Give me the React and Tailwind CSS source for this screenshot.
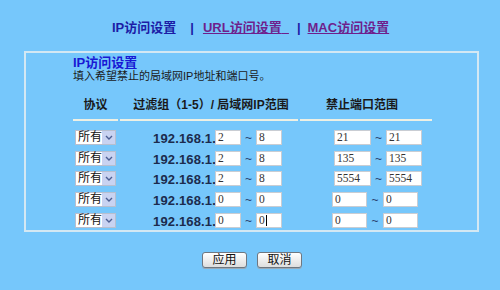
import React from "react";

const FONT = { fontFamily: '"Liberation Sans", "Noto Sans CJK SC", sans-serif' };
const SERIF = { fontFamily: '"Liberation Serif", "Noto Sans CJK SC", serif' };

function Select() {
  return (
    <div className="ml-[2px] flex h-[15px] w-[41px] border border-[#b7bfcf] bg-white">
      <div className="flex-1 pl-[2px] text-[12px] leading-[13px] text-[#111]">所有</div>
      <div className="flex w-[13px] items-center justify-center bg-[#c9d3f1]">
        <svg width="8" height="5" viewBox="0 0 8 5">
          <polyline points="1,1 4,4 7,1" fill="none" stroke="#4d5f93" strokeWidth="1.4" />
        </svg>
      </div>
    </div>
  );
}

function Box({ w, value, caret }) {
  return (
    <div
      className={`flex h-[15px] shrink-0 ${w} items-start border border-[#c9cdd3] bg-white pl-[2px] text-[11.5px] leading-[12px] text-[#333]`}
      style={SERIF}
    >
      <span>{value}</span>
      {caret && <span className="ml-[1px] mt-[1px] h-[11px] w-[1px] bg-black" />}
    </div>
  );
}

function Tilde({ w }) {
  return (
    <div className={`${w} shrink-0 pt-[2px] text-center text-[12px] leading-[15px] text-[#2a4270]`}>~</div>
  );
}

const rows = [
  { a: "2", b: "8", p1: "21", p2: "21", wide: true },
  { a: "2", b: "8", p1: "135", p2: "135", wide: true },
  { a: "2", b: "8", p1: "5554", p2: "5554", wide: true },
  { a: "0", b: "0", p1: "0", p2: "0", wide: false },
  { a: "0", b: "0", p1: "0", p2: "0", wide: false, caret: true },
];

export default function App() {
  return (
    <div className="h-[290px] w-[500px] overflow-hidden bg-[#76c7fb]" style={FONT}>
      {/* top nav */}
      <div className="flex pl-[112px] pt-[21px] text-[13px] font-bold leading-[14px]">
        <span className="text-[#1c1ca6]">IP访问设置</span>
        <span className="ml-[14px] text-[#1c1ca6]">|</span>
        <span className="ml-[9px] text-[#6e1f8c] underline">URL访问设置{"\u00a0\u00a0"}</span>
        <span className="ml-[8px] text-[#1c1ca6]">|</span>
        <span className="ml-[7px] text-[#6e1f8c] underline">MAC访问设置</span>
      </div>

      {/* main box */}
      <div className="ml-[24px] mt-[16px] w-[455px] border-2 border-[#d3e8f3] pl-[47px]">
        <div className="pt-[3px] text-[13px] font-bold leading-[14px] text-[#1818d4]">IP访问设置</div>
        <div className="text-[11px] leading-[13px] text-[#1a1a1a]">填入希望禁止的局域网IP地址和端口号。</div>

        {/* header */}
        <div className="flex text-[12px] font-bold leading-[14px] text-[#1a1a1a]">
          <div className="w-[47px]">
            <div className="w-[45px] border-b-2 border-[#eef0e4] pb-[7px] pt-[15px] text-center">协议</div>
          </div>
          <div className="w-[180px]">
            <div className="w-[178px] border-b-2 border-[#eef0e4] pb-[7px] pl-[4px] pt-[15px] text-center">
              过滤组（1-5）/ 局域网IP范围
            </div>
          </div>
          <div className="w-[132px]">
            <div className="w-[132px] border-b-2 border-[#eef0e4] pb-[7px] pr-[8px] pt-[15px] text-center">
              禁止端口范围
            </div>
          </div>
        </div>

        {/* rows */}
        <div className="mt-[6px] flex flex-col">
          {rows.map((r, i) => (
            <div key={i} className="flex h-[20.7px] items-center">
              <div className="w-[47px]">
                <Select />
              </div>
              <div className="flex w-[180px] items-center pl-[33px]">
                <span className="w-[62px] shrink-0 whitespace-nowrap pt-[2px] text-[13px] font-bold leading-[15px] tracking-[0.15px] text-[#1c2b4d]">192.168.1.</span>
                <Box w="w-[26px]" value={r.a} />
                <Tilde w="w-[15px]" />
                <Box w="w-[26px]" value={r.b} caret={r.caret} />
              </div>
              {r.wide ? (
                <div className="flex w-[132px] items-center pl-[34px]">
                  <Box w="w-[37px]" value={r.p1} />
                  <Tilde w="w-[15px]" />
                  <Box w="w-[36px]" value={r.p2} />
                </div>
              ) : (
                <div className="flex w-[132px] items-center pl-[32px]">
                  <Box w="w-[35px]" value={r.p1} />
                  <Tilde w="w-[16px]" />
                  <Box w="w-[35px]" value={r.p2} />
                </div>
              )}
            </div>
          ))}
        </div>
      </div>

      {/* buttons */}
      <div className="mt-[20px] flex justify-center gap-[10px] pl-[4px]">
        <button className="h-[16px] w-[45px] rounded-[3px] border border-[#6f7780] bg-gradient-to-b from-white to-[#dedede] text-[12px] leading-[14px] text-[#111] shadow-[0_1px_0_#9aa8b4]">
          应用
        </button>
        <button className="h-[16px] w-[45px] rounded-[3px] border border-[#6f7780] bg-gradient-to-b from-white to-[#dedede] text-[12px] leading-[14px] text-[#111] shadow-[0_1px_0_#9aa8b4]">
          取消
        </button>
      </div>
    </div>
  );
}
